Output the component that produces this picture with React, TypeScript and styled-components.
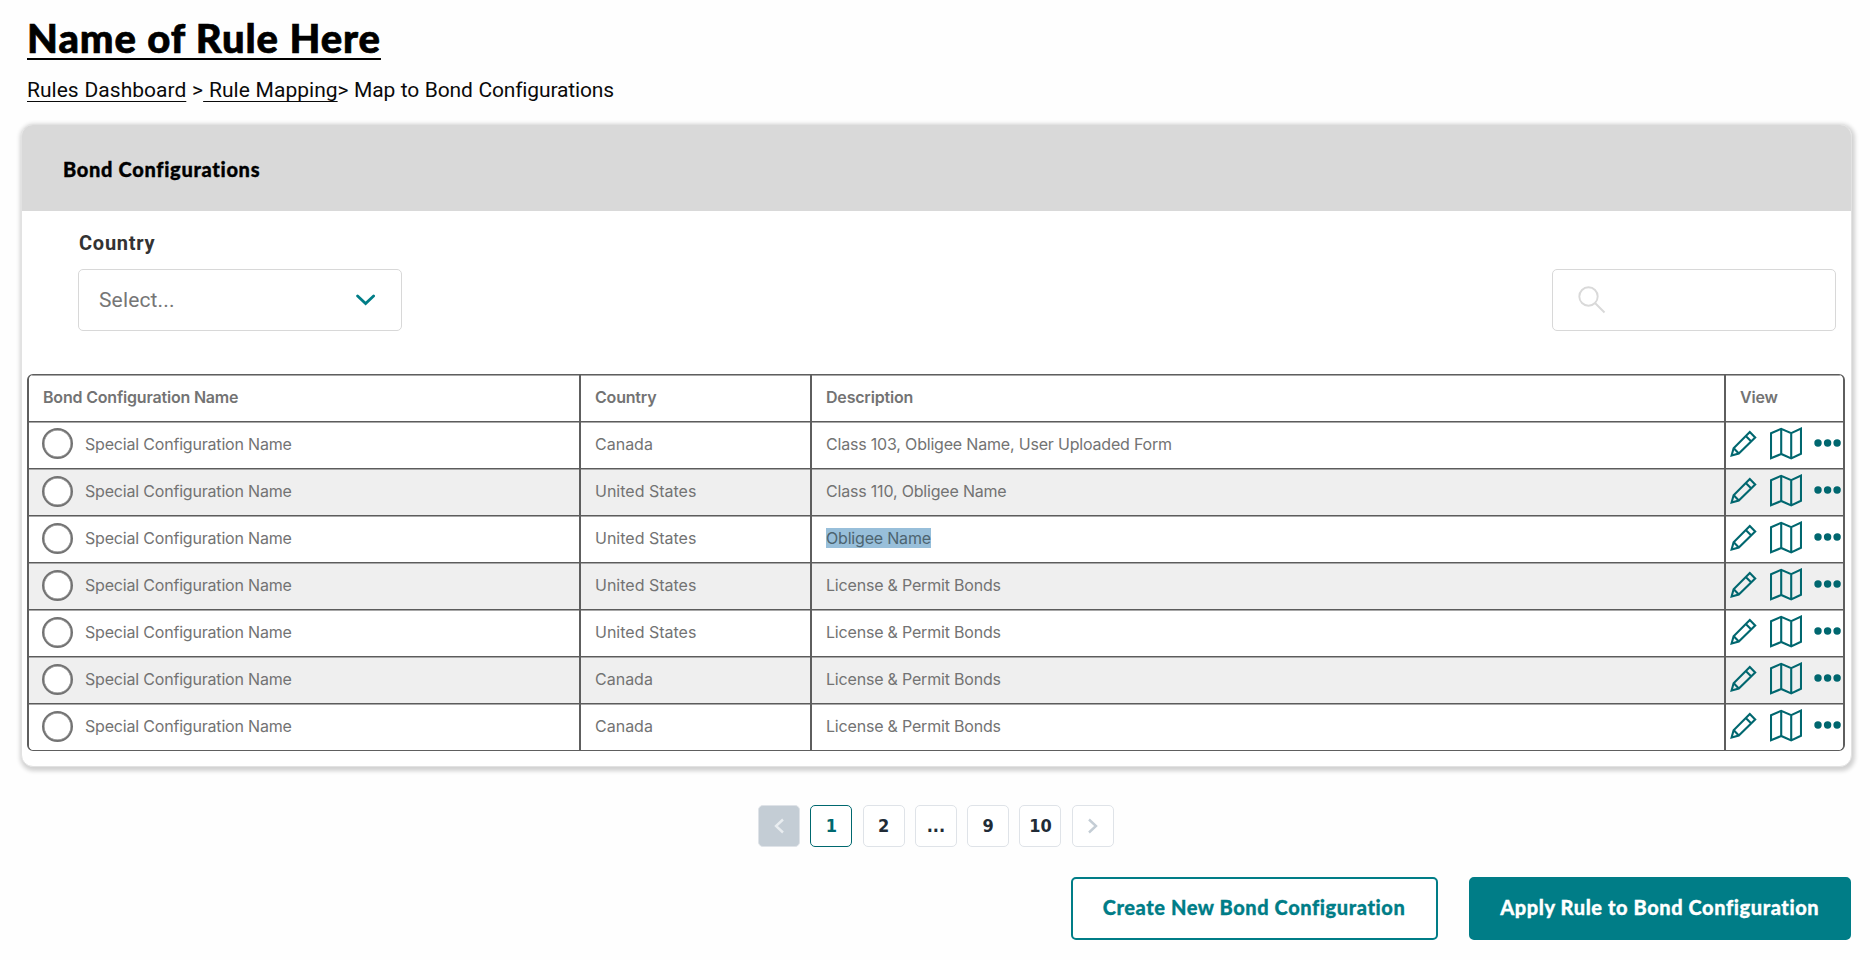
import React from "react";
import styled, { createGlobalStyle } from "styled-components";

const Global = createGlobalStyle`
  * { box-sizing: border-box; }
  body { margin: 0; background: #fff; overflow: hidden; }
  button { font: inherit; margin: 0; padding: 0; background: none; border: 0; }
`;

const Page = styled.div`
  width: 1870px;
  height: 960px;
  padding: 16px 18px 0 21px;
  background: #fefefe;
  font-family: Inter, sans-serif;
`;

const Title = styled.h1`
  width: max-content;
  margin: 0 0 0 6px;
  height: 46px;
  font: 900 40px/45px Lato, sans-serif;
  letter-spacing: 0.93px;
  -webkit-text-stroke: 0.7px #000;
  color: #000;
  text-decoration: underline;
  text-decoration-thickness: 2px;
  text-underline-offset: 5px;
`;

const Crumbs = styled.nav`
  margin: 14px 0 0 6px;
  height: 28px;
  font: 400 21px/28px Roboto, sans-serif;
  letter-spacing: 0.02px;
  word-spacing: 0.6px;
  color: #0a0a0a;
  white-space: pre;
`;

const Crumb = styled.span<{ $link?: boolean; $current?: boolean }>`
  letter-spacing: ${(p) => (p.$current ? "-0.15px" : "inherit")};
  text-decoration: ${(p) => (p.$link ? "underline" : "none")};
  text-decoration-thickness: 1px;
  text-underline-offset: 4px;
  text-decoration-skip-ink: none;
`;

const Panel = styled.section`
  margin-top: 20px;
  height: 643px;
  border: 1px solid #e2e2e2;
  border-radius: 12px;
  background: #fff;
  box-shadow: 1px 2px 4px 2px rgba(0, 0, 0, 0.18);
  overflow: hidden;
`;

const PanelHeader = styled.header`
  height: 86px;
  padding: 1px 0 0 41px;
  display: flex;
  align-items: center;
  background: #d9d9d9;
  font: 900 20px/24px Lato, sans-serif;
  letter-spacing: 0.68px;
  -webkit-text-stroke: 0.35px #000;
  color: #000;
`;

const Filters = styled.div`
  height: 163px;
  padding: 19px 15px 0 56px;
  display: flex;
  justify-content: space-between;
`;

const Label = styled.label`
  display: block;
  height: 39px;
  padding-left: 1px;
  font: 700 20px/26px Roboto, sans-serif;
  letter-spacing: 0.75px;
  color: #333;
`;

const SelectBox = styled.div`
  width: 324px;
  height: 62px;
  padding: 0 25px 0 20px;
  display: flex;
  align-items: center;
  justify-content: space-between;
  border: 1px solid #d8d8d8;
  border-radius: 5px;
  font: 400 21px/26px Roboto, sans-serif;
  letter-spacing: 0.15px;
  color: #767676;
`;

const SearchBox = styled.div`
  margin-top: 39px;
  width: 284px;
  height: 62px;
  padding-left: 24px;
  display: flex;
  align-items: center;
  border: 1px solid #d8d8d8;
  border-radius: 5px;
`;

const Table = styled.div`
  width: 1818px;
  height: 377px;
  margin-left: 5px;
  border: 2px solid #5e5e5e;
  border-top-width: 1px;
  border-bottom-width: 1px;
  border-radius: 6px;
  overflow: hidden;
`;

const Row = styled.div<{ $alt?: boolean; $head?: boolean }>`
  display: grid;
  grid-template-columns: 550px 231px 914px 1fr;
  height: ${(p) => (p.$head ? 46 : 47)}px;
  background: ${(p) => (p.$alt ? "#efefef" : "#fff")};
  box-shadow: inset 0 1px #a8a8a8;
  & + & { border-top: 1px solid #5c5c5c; }
`;

const Cell = styled.div<{ $head?: boolean; $tight?: boolean; $wide?: boolean }>`
  display: flex;
  align-items: center;
  padding-left: ${(p) => (p.$tight ? "4px" : "14px")};
  padding-bottom: 3px;
  font-size: 16px;
  line-height: 20px;
  letter-spacing: ${(p) => (p.$wide ? "0" : "-0.19px")};
  font-weight: ${(p) => (p.$head ? 600 : 400)};
  color: #737373;
  & + & { border-left: 2px solid #5e5e5e; }
`;

const Radio = styled.span<{ $first?: boolean }>`
  flex: none;
  width: 31px;
  height: 31px;
  margin: ${(p) => (p.$first ? -1 : 1)}px 12px 0 -1px;
  border: 2px solid #737373;
  border-radius: 50%;
  background: #fff;
  box-shadow: inset 0 0 0 0.5px #737373;
`;

const Selected = styled.mark`
  background: #98bfda;
  color: #4d6470;
`;

const IconButton = styled.button<{ $gap?: number }>`
  display: flex;
  margin-left: ${(p) => p.$gap ?? 0}px;
  margin-top: -1px;
`;

const Pager = styled.nav`
  margin: 38px 0 0 737px;
  display: flex;
  gap: 10.3px;
`;

const PageButton = styled.button<{ $state?: "active" | "disabled" }>`
  width: 42px;
  height: 42px;
  display: flex;
  align-items: center;
  justify-content: center;
  border: ${(p) => (p.$state === "active" ? "1.5px solid #00686f" : "1px solid #dfe3e8")};
  border-radius: 5px;
  background: ${(p) => (p.$state === "disabled" ? "#c4cdd5" : "#fff")};
  color: ${(p) => (p.$state === "active" ? "#00686f" : "#212b36")};
  font: 700 18px/22px "DejaVu Sans Condensed", "DejaVu Sans", sans-serif;
`;

const Actions = styled.div`
  margin-top: 30px;
  padding-right: 1px;
  display: flex;
  justify-content: flex-end;
  gap: 31px;
`;

const Action = styled.button<{ $primary?: boolean }>`
  width: ${(p) => (p.$primary ? 382.5 : 367)}px;
  height: 63px;
  padding-bottom: 3px;
  border: 2px solid #007d87;
  border-radius: 5px;
  background: ${(p) => (p.$primary ? "#007d87" : "#fff")};
  color: ${(p) => (p.$primary ? "#fff" : "#007d87")};
  font: 900 20px/24px Lato, sans-serif;
  letter-spacing: 0.58px;
  -webkit-text-stroke: 0.3px currentColor;
`;

const Pencil = () => (
  <svg width="27" height="27" viewBox="0 0 27 27" fill="none" stroke="#00676f" strokeWidth="2.1">
    <path d="M19.8 2 25.2 7.5 8.8 23.6 1.6 25.5 3.6 18.2Z M15.8 6 21.3 11.4 M3.8 18.2 8.8 23.4" />
  </svg>
);

const MapIcon = () => (
  <svg width="32" height="33" viewBox="0 0 32 33" fill="none" stroke="#00676f" strokeWidth="2.1">
    <path d="M1 6.2 11.2 1.8 21.2 6.2 31 1.6V26.8L21.2 31.4 11.2 27 1 31.2Z M11.2 1.8V27 M21.2 6.2V31.4" />
  </svg>
);

const Dots = () => (
  <svg width="27" height="8" viewBox="0 0 27 8" fill="#00676f">
    <circle cx="4" cy="4" r="3.7" />
    <circle cx="13.6" cy="4" r="3.7" />
    <circle cx="23.1" cy="4" r="3.7" />
  </svg>
);

const Chevron = () => (
  <svg width="20" height="12" viewBox="0 0 20 12" fill="none" stroke="#007d87" strokeWidth="2.8" strokeLinecap="round">
    <path d="M1.6 2 9.6 9.5 17.6 2" />
  </svg>
);

const Magnifier = () => (
  <svg width="30" height="30" viewBox="0 0 30 30" fill="none" stroke="#d9d9d9" strokeWidth="1.9">
    <circle cx="11.5" cy="11.5" r="9.2" />
    <path d="M18 18 27.5 27.5" />
  </svg>
);

const Arrow = ({ right }: { right?: boolean }) => (
  <svg width="12" height="16" viewBox="0 0 12 16" fill="none" stroke={right ? "#c4cdd5" : "#e9edf0"} strokeWidth="2.4">
    <path d={right ? "M2 1.5 9 8 2 14.5" : "M10 1.5 3 8 10 14.5"} />
  </svg>
);

const rows = [
  { country: "Canada", description: "Class 103, Obligee Name, User Uploaded Form" },
  { country: "United States", description: "Class 110, Obligee Name" },
  { country: "United States", description: "Obligee Name", selected: true },
  { country: "United States", description: "License & Permit Bonds" },
  { country: "United States", description: "License & Permit Bonds" },
  { country: "Canada", description: "License & Permit Bonds" },
  { country: "Canada", description: "License & Permit Bonds" },
];

export default function App() {
  return (
    <Page>
      <Global />
      <Title>Name of Rule Here</Title>
      <Crumbs>
        <Crumb $link>Rules Dashboard</Crumb>
        <Crumb> &gt;</Crumb>
        <Crumb $link> Rule Mapping</Crumb>
        <Crumb $current>&gt; Map to Bond Configurations</Crumb>
      </Crumbs>
      <Panel>
        <PanelHeader>Bond Configurations</PanelHeader>
        <Filters>
          <div>
            <Label>Country</Label>
            <SelectBox>
              Select...
              <Chevron />
            </SelectBox>
          </div>
          <SearchBox>
            <Magnifier />
          </SearchBox>
        </Filters>
        <Table>
          <Row $head>
            <Cell $head>Bond Configuration Name</Cell>
            <Cell $head>Country</Cell>
            <Cell $head>Description</Cell>
            <Cell $head>View</Cell>
          </Row>
          {rows.map((row, i) => (
            <Row key={i} $alt={i % 2 === 1}>
              <Cell>
                <Radio $first={i === 0} />
                Special Configuration Name
              </Cell>
              <Cell $wide>{row.country}</Cell>
              <Cell>{row.selected ? <Selected>{row.description}</Selected> : row.description}</Cell>
              <Cell $tight>
                <IconButton aria-label="Edit"><Pencil /></IconButton>
                <IconButton aria-label="Map" $gap={13}><MapIcon /></IconButton>
                <IconButton aria-label="More" $gap={12}><Dots /></IconButton>
              </Cell>
            </Row>
          ))}
        </Table>
      </Panel>
      <Pager>
        <PageButton $state="disabled" aria-label="Previous"><Arrow /></PageButton>
        <PageButton $state="active">1</PageButton>
        <PageButton>2</PageButton>
        <PageButton>...</PageButton>
        <PageButton>9</PageButton>
        <PageButton>10</PageButton>
        <PageButton aria-label="Next"><Arrow right /></PageButton>
      </Pager>
      <Actions>
        <Action>Create New Bond Configuration</Action>
        <Action $primary>Apply Rule to Bond Configuration</Action>
      </Actions>
    </Page>
  );
}
